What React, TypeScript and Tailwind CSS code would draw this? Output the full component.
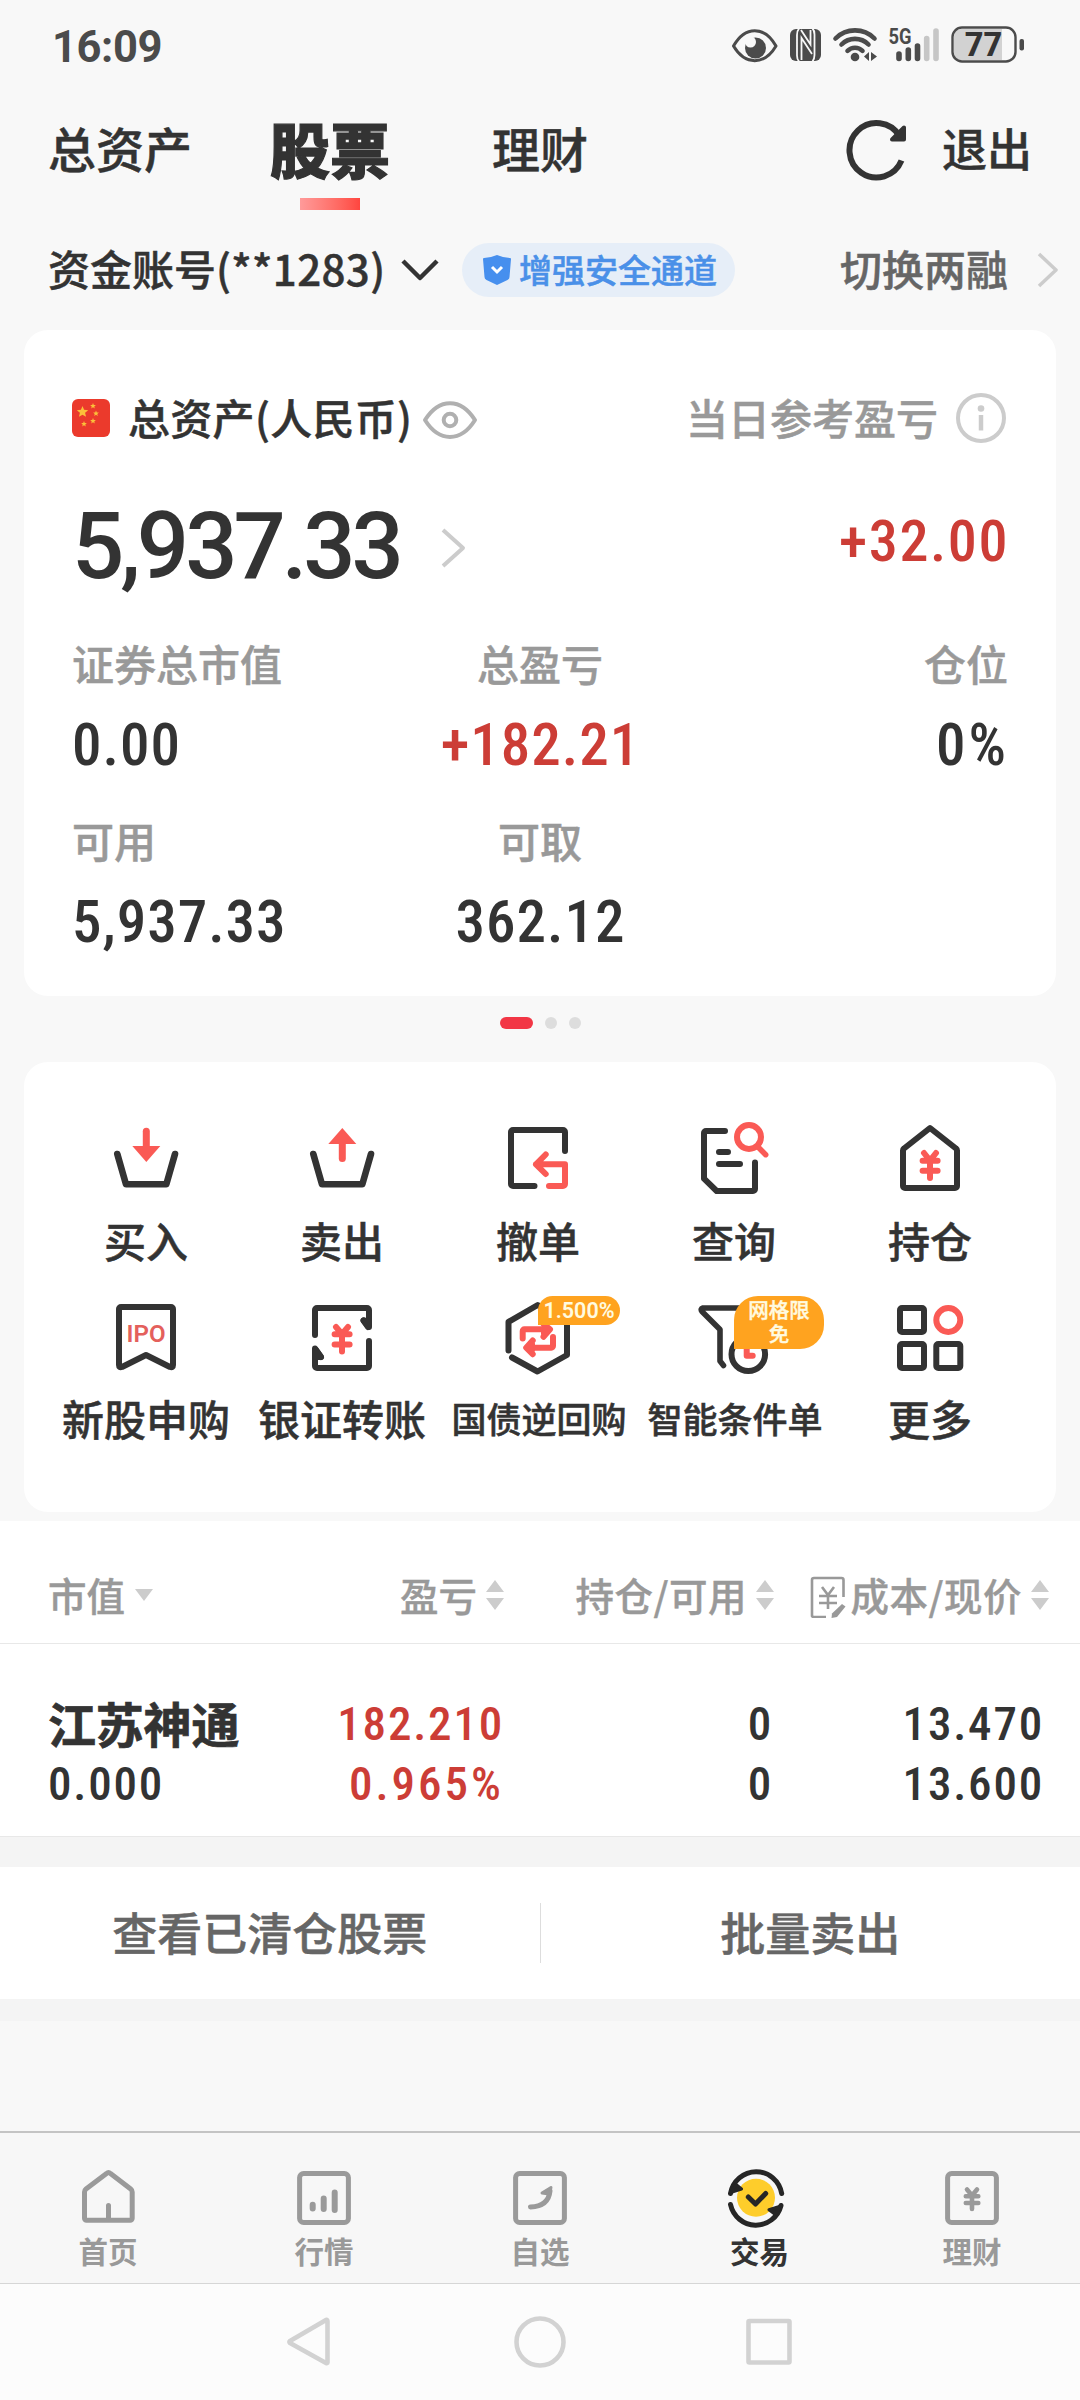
import type { ReactNode } from "react";

const INK = "#333333";
const RED = "#fa5a55";

function StatusIcons() {
  return (
    <svg width="300" height="92" viewBox="728 0 300 92" fill="none">
      {/* eye */}
      <path
        d="M733.500 46 C745 25.500 764.500 25.500 776 46 C764.500 65.500 745 65.500 733.500 46Z"
        stroke="#4b4b4b"
        strokeWidth="3"
        strokeLinejoin="round"
      />
      <circle cx="755.500" cy="48" r="10.500" fill="#4b4b4b" />
      <circle cx="750.500" cy="42" r="5.500" fill="#f8f8f8" />
      {/* nfc */}
      <rect x="790" y="29" width="31" height="32" rx="6" fill="#4b4b4b" />
      <path
        d="M799 61.500q-2-2-2-6V35q0-4 2-6.500M812.500 28.500q2 2 2 6V55q0 4-2 6.500M801.500 60V38L812 54M801 30L810.500 44.500V30"
        stroke="#f8f8f8"
        strokeWidth="1.800"
      />
      {/* wifi */}
      <g stroke="#4b4b4b" strokeWidth="4.600" strokeLinecap="round">
        <path d="M835.500 38.500a27.500 27.500 0 0 1 39 0" />
        <path d="M841.500 44.500a19 19 0 0 1 27 0" />
        <path d="M847.500 50.800a10.600 10.600 0 0 1 15 0" />
      </g>
      <circle cx="855" cy="57" r="4.300" fill="#4b4b4b" />
      <path d="M869 52v9l-5-4.500zM871 52v9l6-4.500z" fill="#4b4b4b" />
      {/* signal */}
      <text
        x="888.500"
        y="44"
        fontSize="22"
        fontWeight="700"
        textLength="23"
        lengthAdjust="spacingAndGlyphs"
        fill="#4b4b4b"
        fontFamily="Roboto, sans-serif"
      >
        5G
      </text>
      <g strokeWidth="5.600" strokeLinecap="round" stroke="#4b4b4b">
        <path d="M899 54v4.500M908.300 50v8.500M917.500 46v12.500" />
        <path d="M926.700 38.500v20M936 31v27.500" stroke="#c6c6c6" />
      </g>
      {/* battery */}
      <path d="M961 29h41v31h-41a7 7 0 0 1-7-7V36a7 7 0 0 1 7-7z" fill="#d2d2d2" />
      <rect x="952.500" y="27.500" width="63" height="34" rx="9.500" stroke="#4b4b4b" strokeWidth="2.400" />
      <rect x="1019.500" y="39" width="4.500" height="11.500" rx="2" fill="#4b4b4b" />
      <text
        x="983.500"
        y="56"
        fontSize="32.500"
        fontWeight="800"
        textAnchor="middle"
        fill="#333333"
        fontFamily="Roboto, sans-serif"
      >
        77
      </text>
    </svg>
  );
}

function Chevron({ w, h, sw, className }: { w: number; h: number; sw: number; className?: string }) {
  return (
    <svg width={w} height={h} viewBox={`0 0 ${w} ${h}`} fill="none" className={className}>
      <path d={`M2 2 L${w - 3} ${h / 2} L2 ${h - 2}`} stroke="#cccccc" strokeWidth={sw} strokeLinejoin="round" />
    </svg>
  );
}

function Star({ x, y, r }: { x: number; y: number; r: number }) {
  const pts = Array.from({ length: 10 }, (_, i) => {
    const a = (Math.PI / 5) * i - Math.PI / 2;
    const d = i % 2 ? r * 0.45 : r;
    return `${x + d * Math.cos(a)},${y + d * Math.sin(a)}`;
  });
  return <polygon points={pts.join(" ")} fill="#fbc03a" />;
}

function Flag() {
  return (
    <svg width="38" height="38" viewBox="0 0 38 38" className="shrink-0">
      <rect width="38" height="38" rx="6" fill="#eb3a2c" />
      <Star x={10.5} y={13} r={6} />
      <Star x={21} y={7} r={3} />
      <Star x={24} y={14.5} r={3} />
      <Star x={21} y={22} r={3} />
      <Star x={12} y={25} r={3} />
    </svg>
  );
}

function Icon({ children }: { children: ReactNode }) {
  return (
    <svg
      width="80"
      height="80"
      viewBox="0 0 80 80"
      fill="none"
      stroke={INK}
      strokeWidth="6"
      strokeLinecap="round"
      strokeLinejoin="round"
    >
      {children}
    </svg>
  );
}

const actions: { label: string; small?: boolean; icon: ReactNode; badge?: ReactNode }[] = [
  {
    label: "买入",
    icon: (
      <Icon>
        <path d="M11.300 36L20 66.300H60.300L69 36" strokeWidth="6.600" />
        <path d="M40.300 13.300V30" stroke={RED} strokeWidth="7" />
        <path d="M26.300 28h28l-14 16z" fill={RED} stroke="none" />
      </Icon>
    ),
  },
  {
    label: "卖出",
    icon: (
      <Icon>
        <path d="M11.300 36L20 66.300H60.300L69 36" strokeWidth="6.600" />
        <path d="M40.300 24V40.500" stroke={RED} strokeWidth="7" />
        <path d="M26.300 26h28l-14-16z" fill={RED} stroke="none" />
      </Icon>
    ),
  },
  {
    label: "撤单",
    icon: (
      <Icon>
        <path d="M67 33V14a2 2 0 0 0-2-2H15a2 2 0 0 0-2 2v52a2 2 0 0 0 2 2h21.500" />
        <path d="M38 46.300h29V66a2 2 0 0 1-2 2H51M47.700 36.500L38 46.300l9.700 9.700" stroke={RED} />
      </Icon>
    ),
  },
  {
    label: "查询",
    icon: (
      <Icon>
        <path d="M31 13H12a2 2 0 0 0-2 2v45.700L22.700 73H59a2 2 0 0 0 2-2V44.500M25 34h9M25 46h21" />
        <circle cx="55" cy="19" r="12" stroke={RED} />
        <path d="M64.300 29.300l7.400 7.400" stroke={RED} strokeWidth="5.500" />
      </Icon>
    ),
  },
  {
    label: "持仓",
    icon: (
      <Icon>
        <path d="M40 10L14 30.500a2.500 2.500 0 0 0-1 2V68a2 2 0 0 0 2 2h50a2 2 0 0 0 2-2V32.500a2.500 2.500 0 0 0-1-2z" />
        <path d="M34 35l6 7.500 6-7.500M32.600 42.700h15M32.600 52.700h15M40 43v17" stroke={RED} />
      </Icon>
    ),
  },
  {
    label: "新股申购",
    icon: (
      <Icon>
        <path d="M15 11h50a2 2 0 0 1 2 2v56q0 3-3 2L40 59 16 71q-3 1-3-2V13a2 2 0 0 1 2-2z" />
        <text
          x="40"
          y="46"
          textAnchor="middle"
          fontSize="24"
          fontWeight="600"
          fontFamily="Roboto, sans-serif"
          fill="#e4605c"
          stroke="none"
          textLength="39"
          lengthAdjust="spacingAndGlyphs"
          className="[-webkit-text-stroke:0px]"
        >
          IPO
        </text>
      </Icon>
    ),
  },
  {
    label: "银证转账",
    icon: (
      <Icon>
        <path d="M13 39V14a2 2 0 0 1 2-2h50a2 2 0 0 1 2 2v17l-5.500-6.500" />
        <path d="M61.500 24.500L66 31v-6z" fill={INK} />
        <path d="M67 45v25a2 2 0 0 1-2 2H15a2 2 0 0 1-2-2V52.500l6 8.500" />
        <path d="M19 61l-5-7v7z" fill={INK} />
        <path d="M34 31l6 7 6-7M32.600 38.300h15M32.600 48.400h15M40 39v16.500" stroke={RED} />
      </Icon>
    ),
  },
  {
    label: "国债逆回购",
    small: true,
    icon: (
      <Icon>
        <path d="M10.500 54.500V25.800L39.700 9 69 25.800V59L39.500 75.500 14 61.500" />
        <path d="M24.700 42.500V35a1.700 1.700 0 0 1 1.700-1.700H51.500M45.500 28l6.500 5.300-6.500 7.500M46 38v-6" stroke={RED} />
        <path d="M55 41v9a1.700 1.700 0 0 1-1.700 1.700H28.500M34.700 44.500l-6.500 7.200 6.500 6.500M34 48v6" stroke={RED} />
      </Icon>
    ),
    badge: (
      <span className="absolute left-10 top-0 flex h-[29px] w-[82px] items-center justify-center rounded-[14.5px] rounded-bl-none bg-[#ffa31f] pt-px font-[Roboto,sans-serif] text-[21.5px] font-semibold text-[#fffbe0] [-webkit-text-stroke:0px]">
        1.500%
      </span>
    ),
  },
  {
    label: "智能条件单",
    small: true,
    icon: (
      <Icon>
        <path d="M70 12H9q-3 1-1 3.500L26 33.500V65l3.500 4.500" strokeWidth="5.600" />
        <path d="M54 34l-9 3" strokeWidth="5.600" />
        <circle cx="54.300" cy="58.300" r="16.800" />
        <path d="M52.700 50v9.800h6" stroke={RED} />
      </Icon>
    ),
    badge: (
      <span className="absolute left-10 top-0 flex h-[53px] w-[90px] items-center justify-center rounded-[24px] rounded-bl-none bg-[#ffa31f] px-3 pb-[3px] text-center text-[20.5px] leading-[24px] text-[#fffbe0] [-webkit-text-stroke:0.4px]">
        网格限
        <br />
        免
      </span>
    ),
  },
  {
    label: "更多",
    icon: (
      <Icon>
        <rect x="10" y="12" width="24" height="24" rx="2" />
        <rect x="10" y="48" width="24" height="24" rx="2" />
        <rect x="46.300" y="48" width="24" height="24" rx="2" />
        <circle cx="58.300" cy="24" r="12" stroke={RED} />
      </Icon>
    ),
  },
];

function Stat({ label, value, className = "" }: { label: string; value: string; className?: string }) {
  return (
    <div className={className}>
      <div className="text-[42px] leading-[42px] text-[#999999]">{label}</div>
      <div className="-mr-px mt-[31px] font-[Roboto,sans-serif] text-[59px] leading-[60px] tracking-[1px] [-webkit-text-stroke:0px] [font-stretch:75%]">
        {value}
      </div>
    </div>
  );
}

function Sort() {
  return (
    <svg width="18" height="30" viewBox="0 0 18 30" className="mt-0.5 shrink-0" fill="#cccccc">
      <path d="M0 12L9 0l9 12zM0 18h18L9 30z" />
    </svg>
  );
}

function TabIcon({ children }: { children: ReactNode }) {
  return (
    <svg
      width="64"
      height="64"
      viewBox="0 0 64 64"
      fill="none"
      stroke="#9a9a9a"
      strokeWidth="5"
      strokeLinecap="round"
      strokeLinejoin="round"
    >
      {children}
    </svg>
  );
}

const tabs: { label: string; active?: boolean; icon: ReactNode }[] = [
  {
    label: "首页",
    icon: (
      <TabIcon>
        <path d="M34.500 7.500a3 3 0 0 0-4 0L10 23a4 4 0 0 0-1.500 3v26.300a2 2 0 0 0 2 2h43.700a2 2 0 0 0 2-2V26a4 4 0 0 0-1.500-3zM32.500 39.500V54" />
      </TabIcon>
    ),
  },
  {
    label: "行情",
    icon: (
      <TabIcon>
        <rect x="7.600" y="7.500" width="48.800" height="49" rx="4" />
        <path d="M20.700 38.800v3.800M31.700 32.500v10.500M42.700 26.500v17.500" strokeWidth="6" />
      </TabIcon>
    ),
  },
  {
    label: "自选",
    icon: (
      <TabIcon>
        <rect x="7.600" y="7.500" width="48.800" height="49" rx="4" />
        <path d="M22.500 41C34 40.500 41 35 42 25" />
        <path d="M43 21.500L34 27l7 1z" fill="#9a9a9a" strokeWidth="3" />
      </TabIcon>
    ),
  },
  {
    label: "交易",
    active: true,
    icon: (
      <TabIcon>
        <circle cx="32" cy="31.800" r="19" fill="#fecd2b" stroke="none" />
        <g stroke="#262626">
          <path d="M6.500 27.500A26 26.500 0 0 1 57.700 27.500M6.500 38.500A26 26.500 0 0 0 57 39.500" />
          <path d="M6.500 26.500l5.500-8 5.500 4.500zM57 40l-12 3.800 6 4.500z" fill="#262626" strokeWidth="3" />
          <path d="M24.300 31l7.200 7 10.200-10.500" />
        </g>
      </TabIcon>
    ),
  },
  {
    label: "理财",
    icon: (
      <TabIcon>
        <rect x="7.600" y="7.500" width="48.800" height="49" rx="4" />
        <path d="M27 23.500l5 6 5-6M25.800 30.200h12.500M25.800 37h12.500M32 31v12" strokeWidth="4.600" />
      </TabIcon>
    ),
  },
];

export default function App() {
  return (
    <div className="flex h-[2400px] w-[1080px] flex-col overflow-hidden bg-[#f8f8f8] font-['Noto_Sans_CJK_SC',sans-serif] font-medium whitespace-nowrap text-[#333333] [-webkit-text-stroke:0.5px]">
      {/* Status bar */}
      <div className="flex h-[92px] shrink-0 items-center justify-between pl-[52px] pr-[52px] [-webkit-text-stroke:0px]">
        <span className="mt-[3px] font-[Roboto,sans-serif] text-[43.5px] font-bold tracking-[-0.4px] text-[#4b4b4b]">
          16:09
        </span>
        <StatusIcons />
      </div>

      {/* Top tabs */}
      <div className="flex h-[112px] shrink-0 items-center pl-12">
        <span className="-mt-0.5 text-[48px] leading-none">总资产</span>
        <span className="relative ml-[78px] text-[60px] font-black leading-none [-webkit-text-stroke:1.2px]">
          股票
          <span className="absolute left-[30px] top-[80px] h-3 w-[60px] bg-linear-to-r from-[#ff9a9a] to-[#ff453f]" />
        </span>
        <span className="-mt-0.5 ml-[102px] text-[48px] leading-none">理财</span>
        <svg width="64" height="64" viewBox="0 0 64 64" fill="none" className="ml-[256px] mt-1">
          <path d="M57.500 42.500A27 27.200 0 1 1 55.500 18" stroke={INK} strokeWidth="6" />
          <path d="M60 9.500V21.500H48z" fill={INK} stroke={INK} strokeWidth="4" strokeLinejoin="round" />
        </svg>
        <span className="-mt-0.5 ml-[34px] text-[45px] leading-none">退出</span>
      </div>

      {/* Account */}
      <div className="mt-[39px] flex h-[54px] shrink-0 items-center pl-12">
        <span className="-mt-1 w-[336px] text-[42px] leading-none">
          资金账号<span className="tracking-[0.4px]">(**1283)</span>
        </span>
        <svg width="40" height="24" viewBox="0 0 40 24" fill="none" className="ml-4">
          <path d="M3 3l17 17L37 3" stroke={INK} strokeWidth="4.500" strokeLinejoin="round" />
        </svg>
        <div className="ml-[22px] flex h-[54px] w-[273px] items-center rounded-full bg-[#e6eef8] pl-[21px] text-[#4a90e8]">
          <svg width="28" height="30" viewBox="0 0 28 30" fill="none">
            <path d="M14 0q7 3 13 3 1 0 1 1l-1.500 18q0 2-2 3L14 30 3.500 25q-2-1-2-3L0 4q0-1 1-1 6 0 13-3z" fill="#468fee" />
            <path d="M9 12l5 5 5-5" stroke="#fff" strokeWidth="3" />
          </svg>
          <span className="-mt-0.5 ml-2 text-[33px] leading-none">增强安全通道</span>
        </div>
        <span className="-mt-1 ml-[105px] text-[42px] leading-none text-[#666666]">切换两融</span>
        <Chevron w={22} h={36} sw={3.5} className="ml-[29px]" />
      </div>

      {/* Asset card */}
      <section className="mx-6 mt-[33px] h-[666px] shrink-0 rounded-[24px] bg-white px-12 pt-[63px]">
        <div className="flex h-[50px] items-center">
          <Flag />
          <span className="-mt-0.5 ml-[18px] w-[284px] text-[42px] leading-none tracking-[0.3px]">总资产(人民币)</span>
          <svg width="56" height="40" viewBox="0 0 56 40" fill="none" stroke="#b0b0b0" strokeWidth="4" className="ml-[10px] mt-1">
            <path d="M3 20C17-2.500 39-2.500 53 20C39 42.500 17 42.500 3 20Z" strokeLinejoin="round" />
            <circle cx="28" cy="20" r="6.300" />
          </svg>
          <span className="-mt-0.5 ml-auto text-[42px] leading-none text-[#999999]">当日参考盈亏</span>
          <svg width="50" height="50" viewBox="0 0 50 50" fill="none" stroke="#cccccc" className="ml-[18px] mr-[2px]">
            <circle cx="25" cy="25" r="23" strokeWidth="4" />
            <circle cx="25" cy="15.500" r="3.300" fill="#cccccc" stroke="none" />
            <path d="M25 22v15.500" strokeWidth="4.500" />
          </svg>
        </div>
        <div className="mt-[52px] flex h-[100px] items-center font-[Roboto,sans-serif] [-webkit-text-stroke:0px]">
          <span className="mt-1 w-[369px] text-[92px] leading-none tracking-[-4px]">5,937.33</span>
          <Chevron w={25} h={40} sw={4} className="mt-1.5" />
          <span className="-mr-px -mt-2 ml-auto text-[58px] leading-none tracking-[1.6px] text-[#cc3d36] [font-stretch:75%]">
            +32.00
          </span>
        </div>
        <div className="mt-[47px] grid grid-cols-3 gap-y-[44px]">
          <Stat label="证券总市值" value="0.00" />
          <Stat label="总盈亏" value="+182.21" className="text-center [&>:last-child]:text-[#cc3d36]" />
          <Stat label="仓位" value="0%" className="text-right [&>:last-child]:tracking-[3px]" />
          <Stat label="可用" value="5,937.33" />
          <Stat label="可取" value="362.12" className="text-center" />
        </div>
      </section>

      {/* Pager */}
      <div className="flex h-[66px] shrink-0 items-start justify-center gap-3 pt-[21px]">
        <span className="h-3 w-[33px] rounded-full bg-[#f23645]" />
        <span className="h-3 w-3 rounded-full bg-[#dddddd]" />
        <span className="h-3 w-3 rounded-full bg-[#dddddd]" />
      </div>

      {/* Actions */}
      <section className="mx-6 h-[450px] shrink-0 rounded-[24px] bg-white pl-6 pt-14">
        <div className="grid w-[980px] grid-cols-5 gap-y-[34px]">
          {actions.map((a) => (
            <div key={a.label} className="flex flex-col items-center">
              <div className="relative">
                {a.icon}
                {a.badge}
              </div>
              <span className={`mt-5 leading-[44px] ${a.small ? "pl-0.5 text-[35px]" : "text-[42px]"}`}>{a.label}</span>
            </div>
          ))}
        </div>
      </section>

      {/* Positions */}
      <section className="mt-[9px] h-[316px] shrink-0 border-b border-[#e8e8e8] bg-white">
        <div className="grid h-[123px] grid-cols-[200px_256px_270px_275px] items-center border-b border-[#e8e8e8] pl-12 pt-6 text-[38.5px] leading-none text-[#999999] [-webkit-text-stroke:0.4px]">
          <div className="flex items-center gap-[10px]">
            市值
            <svg width="18" height="12" viewBox="0 0 18 12" fill="#cccccc" className="mt-0.5">
              <path d="M0 0h18L9 12z" />
            </svg>
          </div>
          <div className="flex items-center justify-end gap-[9px]">
            盈亏
            <Sort />
          </div>
          <div className="flex items-center justify-end gap-[9px]">
            <span className="tracking-[0.5px]">持仓/可用</span>
            <Sort />
          </div>
          <div className="flex items-center justify-end gap-[9px]">
            <span className="flex items-center tracking-[0.5px]">
              <svg width="36" height="42" viewBox="0 0 36 42" fill="none" stroke="#999999" strokeWidth="2.600" className="mr-1 mt-1.5">
                <path d="M33.500 21V4a2 2 0 0 0-2-2H4a2 2 0 0 0-2 2v36a2 2 0 0 0 2 1h12" />
                <path d="M12 11l6 8 6-8M9 20h18M9 27h18M18 19v14" strokeWidth="2.600" />
                <path d="M32 28l3.500 2.500L27 41l-5.500 1 .5-4.500z" fill="#999999" stroke="none" />
              </svg>
              成本/现价
            </span>
            <Sort />
          </div>
        </div>
        <div className="grid grid-cols-[200px_256px_269px_271px] pl-12 pt-[50px] font-[Roboto,sans-serif] text-[47px] leading-[60px] tracking-[1.8px] [-webkit-text-stroke:0px] [font-stretch:75%]">
          <span className="-mt-0.5 font-['Noto_Sans_CJK_SC',sans-serif] text-[48px] font-bold tracking-[-0.2px] [-webkit-text-stroke:0.7px] [font-stretch:100%]">
            江苏神通
          </span>
          <span className="text-right text-[#cc3d36]">182.210</span>
          <span className="text-right">0</span>
          <span className="text-right">13.470</span>
          <span>0.000</span>
          <span className="text-right tracking-[3px] text-[#cc3d36]">0.965%</span>
          <span className="text-right">0</span>
          <span className="text-right">13.600</span>
        </div>
      </section>

      <div className="h-[30px] shrink-0 bg-[#f4f4f4]" />
      <div className="flex h-[132px] shrink-0 items-center bg-white text-[45px] leading-none text-[#666666]">
        <span className="-mt-1 flex-1 text-center">查看已清仓股票</span>
        <span className="h-[60px] w-px bg-[#dddddd]" />
        <span className="-mt-1 flex-1 text-center">批量卖出</span>
      </div>
      <div className="h-[22px] shrink-0 bg-[#f4f4f4]" />
      <div className="flex-1" />

      {/* Tab bar */}
      <nav className="flex h-[153px] shrink-0 border-b border-t-2 border-b-[#d6d6d6] border-t-[#c4c4c4] bg-[#f7f7f7] pt-[33px] [-webkit-text-stroke:0px]">
        {tabs.map((t) => (
          <div key={t.label} className="flex flex-1 flex-col items-center">
            {t.icon}
            <span
              className={`mt-[5px] text-[29.5px] font-bold leading-[30px] ${t.active ? "pl-[7px] text-[#333333]" : "text-[#999999]"}`}
            >
              {t.label}
            </span>
          </div>
        ))}
      </nav>

      {/* System navigation */}
      <div className="flex h-[116px] shrink-0 bg-[#fcfcfc] pl-[284px] pt-8">
        <svg width="512" height="52" viewBox="0 0 512 52" fill="none" stroke="#d2d2d2" strokeWidth="4.600" strokeLinejoin="round">
          <path d="M43.500 5.500v41q0 1-1.500.5L6 27q-1-1 0-2L42 4q1.500-.5 1.500 1.500z" />
          <circle cx="256" cy="26" r="23.500" />
          <rect x="464.500" y="5" width="41" height="41.500" rx="1" />
        </svg>
      </div>
    </div>
  );
}
